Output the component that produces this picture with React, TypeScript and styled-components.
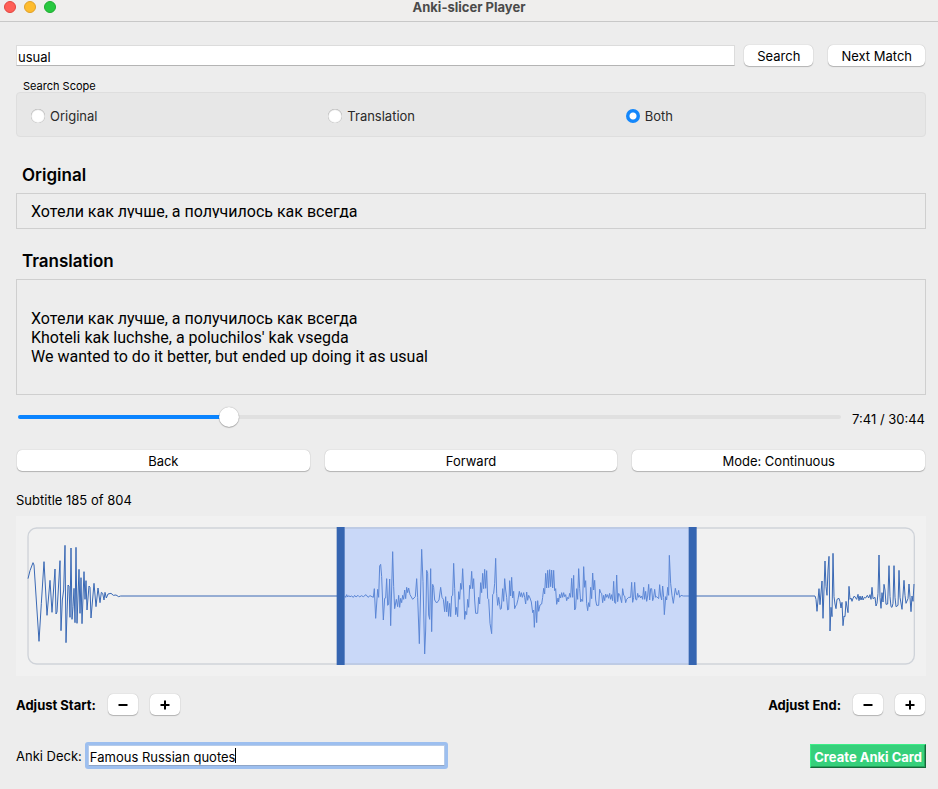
import { useState } from "react";
import styled, { createGlobalStyle, css } from "styled-components";

const GlobalStyle = createGlobalStyle`
  *, *::before, *::after { box-sizing: border-box; }
  body {
    margin: 0;
    background: #ededed;
    color: #000;
    font-family: Inter, "Liberation Sans", sans-serif;
    font-size: 13px;
    line-height: 16px;
  }
  button, input { font: inherit; color: inherit; }
`;

/* ---------- window frame ---------- */

const TitleBar = styled.header`
  display: grid;
  grid-template-columns: 1fr auto 1fr;
  align-items: center;
  height: 22px;
  padding: 0 4px 7px;
  background: #efeeed;
  border-bottom: 1px solid #c8c8c8;
`;

const Lights = styled.div`
  display: flex;
  gap: 8px;
`;

const Light = styled.button<{ $fill: string; $edge: string }>`
  width: 12px;
  height: 12px;
  padding: 0;
  border: 1px solid ${(p) => p.$edge};
  border-radius: 50%;
  background: ${(p) => p.$fill};
`;

const WindowTitle = styled.h1`
  margin: 0;
  font-size: 13px;
  line-height: 14px;
  font-weight: 700;
  color: #4a4a4a;
`;

const Content = styled.main`
  display: flex;
  flex-direction: column;
  padding: 23px 12px 18px 16px;
`;

/* ---------- controls ---------- */

const PushButton = styled.button<{ $wide?: boolean; $glyph?: boolean }>`
  display: flex;
  align-items: center;
  justify-content: center;
  height: 21px;
  padding: 0 13px;
  border: 0;
  border-radius: 5px;
  background: #fff;
  box-shadow: 0 0 1px rgba(0, 0, 0, 0.3), 0 1px 1px rgba(0, 0, 0, 0.22);
  white-space: nowrap;
  ${(p) => p.$wide && css`flex: 1 1 0;`}
  ${(p) =>
    p.$glyph &&
    css`
      width: 30px;
      padding: 0;
    `}
`;

const TextField = styled.input`
  flex: 1;
  min-width: 0;
  height: 21px;
  padding: 2px 1px 0;
  border: 1px solid #dcdcdc;
  border-bottom-color: #b4b4b4;
  background: #fff;
  outline: none;
`;

const SearchRow = styled.form`
  display: flex;
  gap: 15px;
  padding-right: 1px;
`;

const SearchBox = styled.div`
  display: flex;
  flex: 1;
  gap: 9px;
`;

const Scope = styled.fieldset`
  min-width: 0;
  margin: 14px 0 0;
  padding: 0;
  border: 0;
`;

const ScopeLegend = styled.legend`
  padding: 0 0 0 7px;
  font-size: 11px;
  line-height: 12px;
`;

const ScopePanel = styled.div`
  display: grid;
  grid-template-columns: repeat(3, 1fr);
  align-items: center;
  height: 45px;
  padding: 2px 2px 0 14px;
  border: 1px solid #dedede;
  border-radius: 4px;
  background: #e7e7e7;
`;

const RadioLabel = styled.label`
  display: flex;
  align-items: center;
  gap: 5px;
  color: #2a2a2a;
`;

const Radio = styled.input`
  appearance: none;
  width: 14px;
  height: 14px;
  margin: 0;
  border-radius: 50%;
  background: #fff;
  box-shadow: inset 0 0 1px rgba(0, 0, 0, 0.5), inset 0 1px 1px rgba(0, 0, 0, 0.12);
  &:checked {
    background: radial-gradient(circle, #fff 0 3px, #1487fb 4px);
    box-shadow: none;
  }
`;

/* ---------- subtitles ---------- */

const Heading = styled.h2`
  margin: 0 0 7px;
  padding-left: 6px;
  font-size: 17px;
  line-height: 22px;
  font-weight: 600;
`;

const OriginalSection = styled.section`
  margin-top: 27px;
`;

const TranslationSection = styled.section`
  margin-top: 21px;
`;

const TextPanel = styled.div<{ $top: number; $bottom: number }>`
  padding: ${(p) => p.$top}px 14px ${(p) => p.$bottom}px;
  border: 1px solid #cfcfcf;
`;

const SubtitleText = styled.p<{ $clipped?: boolean }>`
  margin: 0;
  font-family: Roboto, "Liberation Sans", sans-serif;
  font-size: 16px;
  line-height: 19px;
  white-space: pre-line;
  ${(p) =>
    p.$clipped &&
    css`
      height: 16px;
      overflow: hidden;
    `}
`;

/* ---------- playback ---------- */

const SeekRow = styled.div`
  display: flex;
  align-items: center;
  gap: 11px;
  margin-top: 11px;
  padding: 0 1px 0 2px;
`;

const Seek = styled.input`
  appearance: none;
  flex: 1;
  min-width: 0;
  height: 20px;
  margin: 0;
  background: transparent;
  &::-webkit-slider-runnable-track {
    height: 4px;
    border-radius: 2px;
    background: linear-gradient(to right, #0a84ff var(--played), #e0e0e0 var(--played));
  }
  &::-webkit-slider-thumb {
    appearance: none;
    width: 20px;
    height: 20px;
    margin-top: -8px;
    border-radius: 50%;
    background: #fff;
    box-shadow: 0 0 1px rgba(0, 0, 0, 0.4), 0 1px 1px rgba(0, 0, 0, 0.22);
  }
`;

const Time = styled.output`
  padding-top: 5px;
  white-space: nowrap;
`;

const TransportRow = styled.div`
  display: flex;
  gap: 15px;
  margin-top: 23px;
  padding: 0 1px;
`;

const Status = styled.p`
  margin: 21px 0 8px;
`;

const WaveSvg = styled.svg`
  display: block;
  width: 100%;
  height: 160px;
  background: #f1f1f1;
`;

const AdjustRow = styled.div`
  display: flex;
  justify-content: space-between;
  margin-top: 18px;
  padding-right: 1px;
`;

const AdjustGroup = styled.div`
  display: flex;
  align-items: center;
  gap: 12px;
`;

const AdjustLabel = styled.span`
  font-weight: 700;
`;

const DeckRow = styled.form`
  display: flex;
  align-items: center;
  justify-content: space-between;
  margin-top: 27px;
`;

const DeckGroup = styled.div`
  display: flex;
  align-items: center;
  gap: 3px;
`;

const DeckFrame = styled.div`
  position: relative;
  display: flex;
  width: 363px;
  padding: 3px;
  border-radius: 3px;
  background: #9dbfef;
`;

const CaretLayer = styled.div`
  position: absolute;
  inset: 3px;
  display: flex;
  align-items: center;
  padding-left: 2px;
  pointer-events: none;
  white-space: pre;
`;

const CaretOffset = styled.span`
  visibility: hidden;
`;

const Caret = styled.span`
  width: 1px;
  height: 15px;
  background: #000;
`;

const DeckField = styled(TextField)`
  border-color: #b6cbe9;
  border-bottom-color: #8fa6c8;
  caret-color: transparent;
`;

const CreateButton = styled.button`
  height: 24px;
  padding: 2px 3px 0;
  border: 1px solid;
  border-color: #3dee88 #16663a #16663a #3dee88;
  box-shadow: inset -1px -1px #26a35c;
  background: #36d07b;
  color: #fff;
  font-weight: 700;
  line-height: 20px;
  white-space: nowrap;
`;

/* ---------- waveform data ---------- */

/* Samples are x,y pairs in a space three units per pixel; dx places each clip. */
const leadIn = {
  dx: -48,
  points:
    "84,206 90,182 99,158 102,165 117,394 124,280 132,155 141,316 150,211 156,307 165,177 168,312 171,306 180,152 183,362 187,270 191,240 195,106 198,398 204,225 207,228 210,322 213,114 216,328 219,290 222,235 225,338 228,112 231,340 237,178 240,310 243,203 246,341 252,185 255,268 258,212 261,300 267,228 270,232 273,324 282,220 288,290 294,234 300,278 304,247 308,250 312,270 315,247 319,264 324,252 333,250 340,256 348,255 356,260 362,258 1011,258",
};

const phraseStart = {
  dx: 912,
  points:
    "75,258 77,262 80,254 83,261 86,257 90,260 95,258 100,262 104,256 108,261 114,256 119,261 124,257 130,260 138,254 144,262 150,257 156,260 160,262 163,236 167,325 173,238 176,262 179,168 182,163 185,200 190,330 194,265 197,264 200,206 203,286 206,282 209,207 212,347 218,125 221,230 224,296 229,268 233,290 236,256 239,292 242,265 245,278 248,256 251,268 254,240 257,266 260,232 263,248 266,234 270,254 278,268 286,260 290,206 293,262 298,401 305,118 309,215 314,432 317,360 320,181 323,190 326,315 329,328 332,176 335,365 338,223 341,232 344,270 350,279 357,270 362,232 366,262 370,268 374,305 377,260 380,306 383,274 386,319 389,280 392,320 395,258 398,256 401,160 404,235 407,314 410,292 413,320 416,245 419,268 422,220 425,238 428,176 431,240 434,328 437,304 440,314 443,268 446,292 449,226 452,236 455,184 458,236 461,206 464,270 467,310 473,310 476,262 479,282 482,218 485,248 488,190 491,236 494,178 497,235 500,182 503,265 506,268 510,340 515,371 518,254 521,250 524,220 527,145 530,250 533,286 536,262 539,283 541,298 544,296 548,236 551,274 554,206 557,240 560,262 563,300 566,298 569,212 572,258",
};

const phraseEnd = {
  dx: 1482,
  points:
    "2,258 5,202 8,264 11,244 14,296 17,288 20,284 24,268 28,244 31,260 34,248 37,262 41,248 44,262 47,282 50,246 53,271 56,256 60,264 64,276 68,308 71,300 73,352 77,274 80,338 83,272 86,304 90,285 95,282 98,262 101,235 104,252 107,190 110,234 113,181 116,233 119,179 122,230 125,180 128,234 131,181 134,242 137,236 140,283 144,264 146,276 149,253 152,264 155,248 158,262 161,248 164,260 167,254 170,272 173,262 176,266 179,250 182,262 185,205 188,262 191,196 194,300 197,294 200,236 203,268 206,176 209,235 212,276 215,268 218,274 221,170 224,232 227,212 230,280 233,302 236,278 239,290 242,232 245,266 248,189 251,240 254,211 257,270 260,286 266,286 269,238 272,248 275,250 278,278 281,256 284,272 287,252 290,262 293,254 296,265 299,250 302,268 305,254 308,272 311,214 314,278 317,280 320,195 323,275 326,250 329,254 335,278 338,236 341,256 344,258 347,278 350,268 356,262 362,262 365,217 368,277 371,262 374,217 377,268 380,270 383,250 386,262 389,256 392,264 395,258 398,268 401,232 404,268 407,244 410,274 413,258 416,223 419,270 422,236 425,236 428,272 431,262 434,238 437,262 440,260 446,266 449,224 452,258 455,270 458,228 461,262 463,314 467,260 470,270 473,232 476,256 478,136 482,220 486,256 490,280 496,235 500,254 503,254 506,241 509,262 513,256 520,258 540,258",
};

const leadOut = {
  dx: 2322,
  points:
    "-282,258 75,258 78,268 81,304 87,236 90,284 96,213 99,325 105,153 108,230 111,256 114,180 117,139 120,363 123,292 126,320 129,130 132,260 135,282 138,296 141,268 147,265 150,275 153,294 156,277 159,347 162,318 165,320 168,274 174,308 177,229 180,268 183,264 186,274 189,265 193,258 200,268 204,253 207,272 210,258 213,270 217,258 219,270 223,262 227,264 232,256 236,264 240,254 243,268 246,232 249,266 252,264 255,262 258,288 261,280 264,250 267,135 270,262 273,295 276,248 279,276 282,223 285,240 288,283 293,282 297,167 300,260 303,290 306,292 309,280 312,167 315,262 318,290 324,286 327,181 330,262 336,298 342,211 345,256 348,280 354,266 357,222 360,262 363,305 366,258 369,274 372,222",
};

type Clip = { dx: number; points: string };

function Trace({ clip, color }: { clip: Clip; color: string }) {
  return (
    <polyline
      points={clip.points}
      transform={`translate(${clip.dx} -18)`}
      fill="none"
      stroke={color}
      strokeWidth={3}
      strokeLinejoin="bevel"
    />
  );
}

function Waveform() {
  return (
    <WaveSvg viewBox="0 0 2730 480" preserveAspectRatio="none" role="img" aria-label="Waveform">
      <rect x="36" y="36" width="2659" height="408" rx="26" fill="none" stroke="#cfd3d9" strokeWidth="4" />
      <rect x="975" y="34" width="1056" height="412" fill="#c9d8f8" />
      <path d="M987 36H2019M987 444H2019" stroke="#b9c6e0" strokeWidth="4" />
      <Trace clip={leadIn} color="#3a69b5" />
      <Trace clip={phraseStart} color="#5c87d6" />
      <Trace clip={phraseEnd} color="#5c87d6" />
      <Trace clip={leadOut} color="#3a69b5" />
      <rect x="962" y="33" width="24" height="414" fill="#3565b1" />
      <rect x="2018" y="33" width="24" height="414" fill="#3565b1" />
    </WaveSvg>
  );
}

function SignIcon({ plus }: { plus?: boolean }) {
  return (
    <svg width="10" height="10" viewBox="0 0 10 10" aria-hidden="true">
      <path d={plus ? "M.5 5h9M5 .5v9" : "M.5 5h9"} stroke="#000" strokeWidth="2" />
    </svg>
  );
}

function Adjuster({ label }: { label: string }) {
  return (
    <AdjustGroup role="group" aria-label={label}>
      <AdjustLabel>{label}</AdjustLabel>
      <PushButton $glyph type="button" aria-label="Earlier">
        <SignIcon />
      </PushButton>
      <PushButton $glyph type="button" aria-label="Later">
        <SignIcon plus />
      </PushButton>
    </AdjustGroup>
  );
}

const scopes = ["Original", "Translation", "Both"];
const original = "Хотели как лучше, а получилось как всегда";
const translation = `${original}
Khoteli kak luchshe, a poluchilos' kak vsegda
We wanted to do it better, but ended up doing it as usual`;
const duration = 1844;

const clock = (s: number) => `${Math.floor(s / 60)}:${String(s % 60).padStart(2, "0")}`;

export default function App() {
  const [query, setQuery] = useState("usual");
  const [scope, setScope] = useState("Both");
  const [position, setPosition] = useState(461);
  const [deck, setDeck] = useState("Famous Russian quotes");

  return (
    <>
      <GlobalStyle />
      <TitleBar>
        <Lights>
          <Light $fill="#ff5f57" $edge="#e2463f" aria-label="Close" />
          <Light $fill="#febc2e" $edge="#e0a028" aria-label="Minimize" />
          <Light $fill="#28c840" $edge="#1eab2f" aria-label="Zoom" />
        </Lights>
        <WindowTitle>Anki-slicer Player</WindowTitle>
      </TitleBar>
      <Content>
        <SearchRow onSubmit={(e) => e.preventDefault()}>
          <SearchBox>
            <TextField aria-label="Search text" value={query} onChange={(e) => setQuery(e.target.value)} />
            <PushButton type="submit">Search</PushButton>
          </SearchBox>
          <PushButton type="button">Next Match</PushButton>
        </SearchRow>

        <Scope>
          <ScopeLegend>Search Scope</ScopeLegend>
          <ScopePanel>
            {scopes.map((name) => (
              <RadioLabel key={name}>
                <Radio type="radio" name="scope" checked={scope === name} onChange={() => setScope(name)} />
                {name}
              </RadioLabel>
            ))}
          </ScopePanel>
        </Scope>

        <OriginalSection>
          <Heading>Original</Heading>
          <TextPanel $top={8} $bottom={10}>
            <SubtitleText $clipped>{original}</SubtitleText>
          </TextPanel>
        </OriginalSection>

        <TranslationSection>
          <Heading>Translation</Heading>
          <TextPanel $top={29} $bottom={28}>
            <SubtitleText>{translation}</SubtitleText>
          </TextPanel>
        </TranslationSection>

        <SeekRow>
          <Seek
            type="range"
            aria-label="Position"
            min={0}
            max={duration}
            value={position}
            onChange={(e) => setPosition(Number(e.target.value))}
            style={{ "--played": `${(position / duration) * 100}%` } as React.CSSProperties}
          />
          <Time>
            {clock(position)} / {clock(duration)}
          </Time>
        </SeekRow>

        <TransportRow>
          <PushButton $wide type="button">Back</PushButton>
          <PushButton $wide type="button">Forward</PushButton>
          <PushButton $wide type="button">Mode: Continuous</PushButton>
        </TransportRow>

        <Status>Subtitle 185 of 804</Status>
        <Waveform />

        <AdjustRow>
          <Adjuster label="Adjust Start:" />
          <Adjuster label="Adjust End:" />
        </AdjustRow>

        <DeckRow onSubmit={(e) => e.preventDefault()}>
          <DeckGroup>
            <label htmlFor="deck">Anki Deck:</label>
            <DeckFrame>
              <DeckField id="deck" value={deck} onChange={(e) => setDeck(e.target.value)} />
              <CaretLayer aria-hidden="true">
                <CaretOffset>{deck}</CaretOffset>
                <Caret />
              </CaretLayer>
            </DeckFrame>
          </DeckGroup>
          <CreateButton type="submit">Create Anki Card</CreateButton>
        </DeckRow>
      </Content>
    </>
  );
}
